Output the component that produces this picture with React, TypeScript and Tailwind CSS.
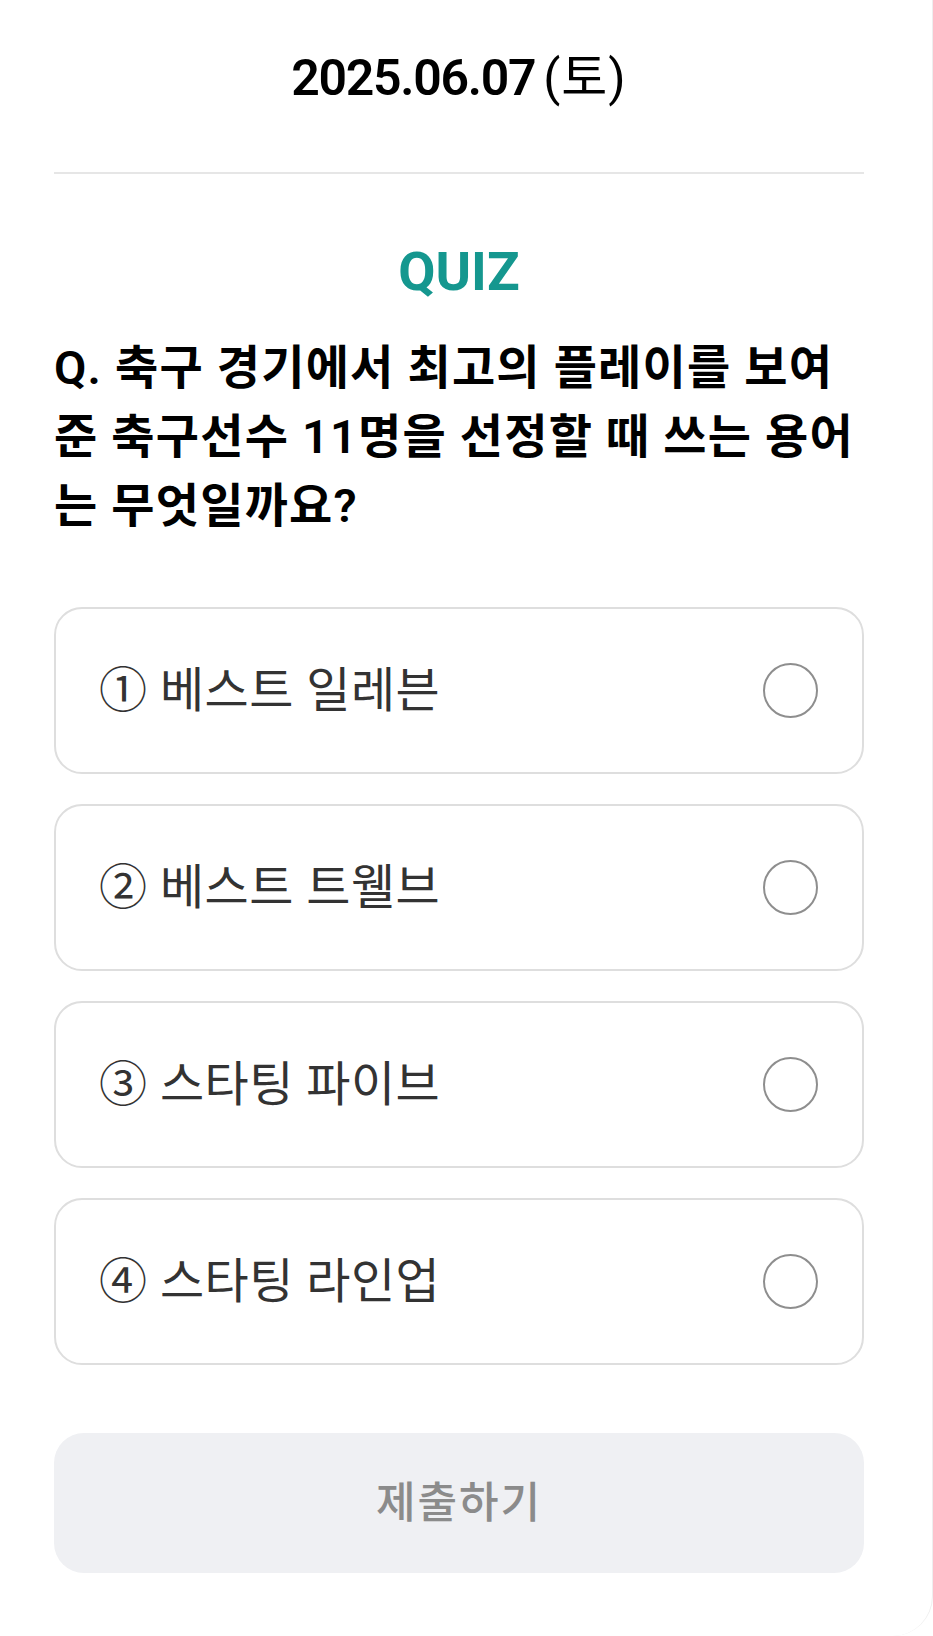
import React from "react";

const options = ["① 베스트 일레븐", "② 베스트 트웰브", "③ 스타팅 파이브", "④ 스타팅 라인업"];

export default function App() {
  return (
    <div
      className="w-[933px] h-[1636px] bg-white border-r border-[#eeeeee] rounded-br-[40px] overflow-hidden"
      style={{ fontFamily: 'Roboto, "Noto Sans CJK KR", sans-serif' }}
    >
      <div className="w-[918px] px-[54px] flex flex-col">
        <div className="pt-[49px] h-[107px] flex justify-center text-[50px] leading-[58px] text-black">
          <span className="font-semibold tracking-[-1.3px]">2025.06.07</span>
          <span className="font-normal ml-[8px] tracking-[1px]">(토)</span>
        </div>
        <div className="mt-[65px] h-[2px] bg-[#e6e6e6]" />
        <div className="mt-[68px] text-center text-[54px] leading-[60px] font-bold text-[#15978f]">QUIZ</div>
        <div className="mt-[31px] text-[47px] leading-[69px] font-semibold tracking-[1.2px] text-black">
          Q. 축구 경기에서 최고의 플레이를 보여준 축구선수 11명을 선정할 때 쓰는 용어는 무엇일까요?
        </div>
        <div className="mt-[67px] flex flex-col gap-[30px]">
          {options.map((o) => (
            <div
              key={o}
              className="h-[167px] rounded-[28px] border-2 border-[#dedede] flex items-center justify-between pl-[43px] pr-[44px]"
            >
              <span className="text-[48px] tracking-[0.5px] text-[#333333] font-normal">{o}</span>
              <span className="w-[55px] h-[55px] rounded-full border-2 border-[#8e8e8e]" />
            </div>
          ))}
        </div>
        <div className="mt-[68px] h-[140px] rounded-[30px] bg-[#eff0f3] flex items-center justify-center">
          <span className="text-[43px] font-medium tracking-[2px] text-[#8b8b8b]">제출하기</span>
        </div>
      </div>
    </div>
  );
}
